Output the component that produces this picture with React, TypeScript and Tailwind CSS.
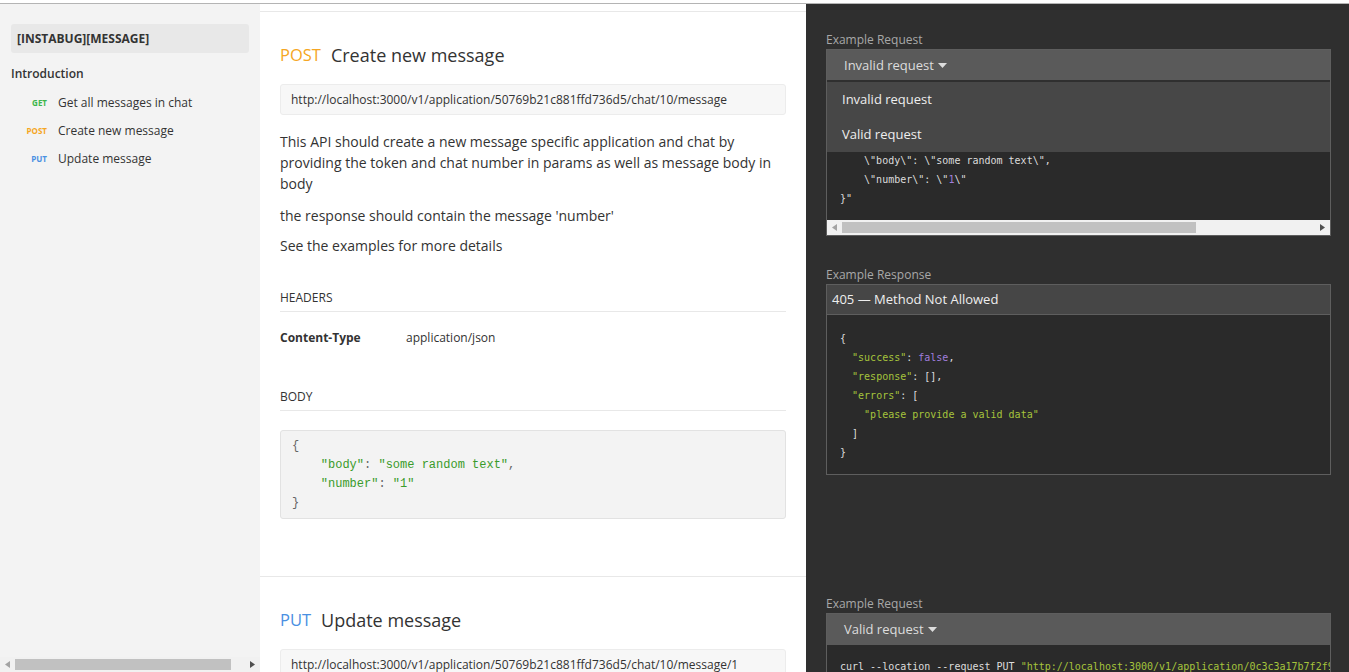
const sans = { fontFamily: '"Open Sans", "Noto Sans", sans-serif' };

function Caret() {
  return (
    <svg width="9" height="5" viewBox="0 0 9 5" className="ml-[4px] inline-block">
      <path d="M0 0 L9 0 L4.5 5 Z" fill="#dddddd" />
    </svg>
  );
}

function HScrollbar({ thumbLeft, thumbWidth }: { thumbLeft: number; thumbWidth: number }) {
  return (
    <div className="relative h-[15px] bg-[#f1f1f1]">
      <svg width="5" height="7" viewBox="0 0 5 7" className="absolute left-[5px] top-[4px]">
        <path d="M5 0 L5 7 L0 3.5 Z" fill="#a3a3a3" />
      </svg>
      <div
        className="absolute top-[2px] h-[11px] bg-[#c1c1c1]"
        style={{ left: thumbLeft, width: thumbWidth }}
      />
      <svg width="5" height="7" viewBox="0 0 5 7" className="absolute right-[5px] top-[4px]">
        <path d="M0 0 L0 7 L5 3.5 Z" fill="#505050" />
      </svg>
    </div>
  );
}

function Sidebar() {
  const items = [
    { m: "GET", c: "text-[#3cb64a]", t: "Get all messages in chat" },
    { m: "POST", c: "text-[#f5a623]", t: "Create new message" },
    { m: "PUT", c: "text-[#4a90e2]", t: "Update message" },
  ];
  return (
    <div className="relative w-[260px] shrink-0 bg-[#f3f3f3]" style={sans}>
      <div className="px-[11px] pt-[20px]">
        <div className="flex h-[29px] items-center rounded-[3px] bg-[#e8e8e8] px-[6px] text-[12px] font-bold text-[#333]">
          [INSTABUG][MESSAGE]
        </div>
        <div className="mt-[11px] text-[12px] font-semibold leading-[20px] text-[#333]">Introduction</div>
        <div className="mt-[5px] flex flex-col">
          {items.map((i) => (
            <div key={i.m} className="flex h-[28px] items-center">
              <span className={`w-[36px] text-right text-[8px] font-bold ${i.c}`}>{i.m}</span>
              <span className="ml-[11px] text-[12px] text-[#333]">{i.t}</span>
            </div>
          ))}
        </div>
      </div>
      <div className="absolute bottom-0 left-0 right-0">
        <HScrollbar thumbLeft={15} thumbWidth={216} />
      </div>
    </div>
  );
}

function EndpointLeft({
  method,
  methodColor,
  title,
  url,
  children,
}: {
  method: string;
  methodColor: string;
  title: string;
  url: string;
  children?: React.ReactNode;
}) {
  return (
    <div className="px-[20px] pt-[30px]" style={sans}>
      <h2 className="flex items-center text-[18px] leading-[26px] text-[#333]">
        <span className={`text-[16.5px] ${methodColor}`}>{method}</span>
        <span className="ml-[10px]">{title}</span>
      </h2>
      <div className="mt-[16px] flex h-[31px] items-center rounded-[3px] border border-[#ececec] bg-[#f7f7f7] px-[10px] text-[12px] text-[#333]">
        {url}
      </div>
      {children}
    </div>
  );
}

function ExampleLabel({ children }: { children: React.ReactNode }) {
  return <div className="text-[12px] leading-[16px] text-[#a8a8a8]">{children}</div>;
}

const mono = { fontFamily: '"DejaVu Sans Mono", monospace' };

export default function App() {
  const g = "text-[#a6c43c]";
  return (
    <div className="flex h-[672px] flex-col overflow-hidden bg-white">
      <div className="h-[4px] shrink-0 border-b border-[#b4b4b4] bg-white" />
      <div className="flex min-h-0 flex-1">
        <Sidebar />
        <div className="flex min-w-0 flex-1 flex-col bg-[#2f2f2f]">
          <div className="h-[7px] w-[546px] shrink-0 bg-white" />

          {/* row 1 */}
          <div className="flex h-[565px] shrink-0">
            <div className="w-[546px] shrink-0 border-t border-[#e8e8e8] bg-white">
              <EndpointLeft
                method="POST"
                methodColor="text-[#f5a623]"
                title="Create new message"
                url="http://localhost:3000/v1/application/50769b21c881ffd736d5/chat/10/message"
              >
                <div className="mt-[16px] text-[14px] leading-[21px] text-[#333]">
                  <p className="mb-[11px]">
                    This API should create a new message specific application and chat by providing the token and chat
                    number in params as well as message body in body
                  </p>
                  <p className="mb-[9px]">the response should contain the message 'number'</p>
                  <p>See the examples for more details</p>
                </div>

                <div className="mt-[34px] border-b border-[#e8e8e8] pb-[5px] text-[12px] leading-[16px] text-[#333]">
                  HEADERS
                </div>
                <div className="mt-[18px] flex text-[12px] leading-[16px] text-[#333]">
                  <span className="w-[126px] font-bold">Content-Type</span>
                  <span>application/json</span>
                </div>

                <div className="mt-[43px] border-b border-[#e8e8e8] pb-[5px] text-[12px] leading-[16px] text-[#333]">
                  BODY
                </div>
                <pre
                  className="mt-[19px] rounded-[3px] border border-[#e2e2e2] bg-[#f3f3f3] px-[11px] pb-[5px] pt-[6px] text-[12px] leading-[19px] text-[#666]"
                  style={{ fontFamily: '"Liberation Mono", monospace' }}
                >
                  {"{\n    "}
                  <span className="text-[#3a9b2b]">"body"</span>
                  {": "}
                  <span className="text-[#3a9b2b]">"some random text"</span>
                  {",\n    "}
                  <span className="text-[#3a9b2b]">"number"</span>
                  {": "}
                  <span className="text-[#3a9b2b]">"1"</span>
                  {"\n}"}
                </pre>
              </EndpointLeft>
            </div>

            <div className="min-w-0 flex-1 pl-[20px] pr-[18px] pt-[21px]" style={sans}>
              <ExampleLabel>Example Request</ExampleLabel>
              <div className="relative mt-[1px] border border-[#5e5e5e]">
                <div className="flex h-[31px] items-center bg-[#5a5a5a] pl-[17px] text-[13px] text-[#dddddd]">
                  Invalid request
                  <Caret />
                </div>
                <div className="bg-[#2a2a2a]">
                  <pre
                    className="overflow-hidden whitespace-pre px-[13px] pb-[12px] pt-[13px] text-[10px] leading-[19px] text-[#dddddd]"
                    style={mono}
                  >
                    {"curl --location --request POST "}
                    <span className={g}>"http://localhost:3000/v1/application/50769b21c881ffd736d5/chat/10/message"</span>
                    {" \\\n--header "}
                    <span className={g}>'Content-Type: application/json'</span>
                    {" \\\n--data-raw "}
                    {'"{\n    \\"body\\": \\"some random text\\",\n    \\"number\\": \\"'}
                    <span className="text-[#a07ede]">1</span>
                    {'\\"\n}"'}
                  </pre>
                  <HScrollbar thumbLeft={15} thumbWidth={354} />
                </div>
                <div className="absolute left-0 right-0 top-[30px] border-t-2 border-[#2f2f2f] bg-[#474747] text-[13px] text-[#eeeeee]">
                  <div className="flex h-[35px] items-center pl-[15px]">Invalid request</div>
                  <div className="flex h-[35px] items-center pl-[15px]">Valid request</div>
                </div>
              </div>

              <div className="mt-[31px]">
                <ExampleLabel>Example Response</ExampleLabel>
                <div className="mt-[1px] border border-[#5e5e5e]">
                  <div className="flex h-[30px] items-center border-b border-[#5e5e5e] bg-[#464646] pl-[5px] text-[13px] text-[#eeeeee]">
                    405 — Method Not Allowed
                  </div>
                  <pre
                    className="bg-[#2a2a2a] px-[13px] pb-[12px] pt-[14px] text-[10px] leading-[19px] text-[#dddddd]"
                    style={mono}
                  >
                    {"{\n  "}
                    <span className={g}>"success"</span>
                    {": "}
                    <span className="text-[#a07ede]">false</span>
                    {",\n  "}
                    <span className={g}>"response"</span>
                    {": [],\n  "}
                    <span className={g}>"errors"</span>
                    {": [\n    "}
                    <span className={g}>"please provide a valid data"</span>
                    {"\n  ]\n}"}
                  </pre>
                </div>
              </div>
            </div>
          </div>

          {/* row 2 */}
          <div className="flex flex-1">
            <div className="w-[546px] shrink-0 border-t border-[#e8e8e8] bg-white">
              <EndpointLeft
                method="PUT"
                methodColor="text-[#4a90e2]"
                title="Update message"
                url="http://localhost:3000/v1/application/50769b21c881ffd736d5/chat/10/message/1"
              />
            </div>
            <div className="min-w-0 flex-1 pl-[20px] pr-[18px] pt-[20px]" style={sans}>
              <ExampleLabel>Example Request</ExampleLabel>
              <div className="mt-[1px] border border-[#5e5e5e]">
                <div className="flex h-[31px] items-center bg-[#5a5a5a] pl-[17px] text-[13px] text-[#dddddd]">
                  Valid request
                  <Caret />
                </div>
                <pre
                  className="overflow-hidden whitespace-pre bg-[#2a2a2a] px-[13px] pb-[12px] pt-[12px] text-[10px] leading-[19px] text-[#dddddd]"
                  style={mono}
                >
                  {"curl --location --request PUT "}
                  <span className={g}>"http://localhost:3000/v1/application/0c3c3a17b7f2f9a1e0b2/chat/10/message/1"</span>
                  {" \\"}
                </pre>
              </div>
            </div>
          </div>
        </div>
      </div>
    </div>
  );
}
